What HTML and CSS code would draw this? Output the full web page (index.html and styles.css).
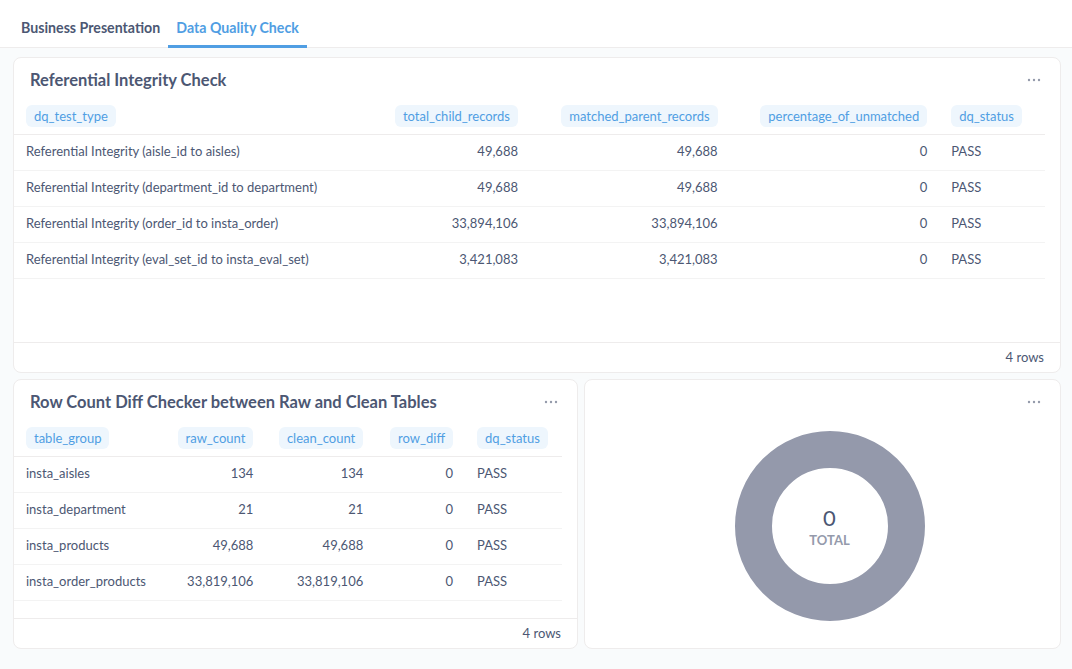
FILE: index.html
```html
<!DOCTYPE html>
<html>
<head>
<meta charset="utf-8">
<link rel="stylesheet" href="styles.css">
</head>
<body>
<div class="tabs">
  <div class="tab">Business Presentation</div>
  <div class="tab active">Data Quality Check</div>
</div>
<div class="grid">
  <section class="card card-wide">
    <div class="card-head">
      <h2 class="title">Referential Integrity Check</h2>
      <svg class="more" width="14" height="4" viewBox="0 0 14 4"><circle cx="2" cy="2" r="1.2"/><circle cx="7" cy="2" r="1.2"/><circle cx="12" cy="2" r="1.2"/></svg>
    </div>
    <div class="card-body">
      <table class="tbl">
        <colgroup><col style="width:370px"><col style="width:145px"><col style="width:200px"><col style="width:210px"><col style="width:106px"></colgroup>
        <thead><tr>
          <th><span class="pill">dq_test_type</span></th>
          <th class="num"><span class="pill">total_child_records</span></th>
          <th class="num"><span class="pill">matched_parent_records</span></th>
          <th class="num"><span class="pill">percentage_of_unmatched</span></th>
          <th><span class="pill">dq_status</span></th>
        </tr></thead>
        <tbody>
          <tr><td>Referential Integrity (aisle_id to aisles)</td><td class="num">49,688</td><td class="num">49,688</td><td class="num">0</td><td>PASS</td></tr>
          <tr><td>Referential Integrity (department_id to department)</td><td class="num">49,688</td><td class="num">49,688</td><td class="num">0</td><td>PASS</td></tr>
          <tr><td>Referential Integrity (order_id to insta_order)</td><td class="num">33,894,106</td><td class="num">33,894,106</td><td class="num">0</td><td>PASS</td></tr>
          <tr><td>Referential Integrity (eval_set_id to insta_eval_set)</td><td class="num">3,421,083</td><td class="num">3,421,083</td><td class="num">0</td><td>PASS</td></tr>
        </tbody>
      </table>
    </div>
    <div class="card-foot">4 rows</div>
  </section>

  <section class="card card-left">
    <div class="card-head">
      <h2 class="title">Row Count Diff Checker between Raw and Clean Tables</h2>
      <svg class="more" width="14" height="4" viewBox="0 0 14 4"><circle cx="2" cy="2" r="1.2"/><circle cx="7" cy="2" r="1.2"/><circle cx="12" cy="2" r="1.2"/></svg>
    </div>
    <div class="card-body">
      <table class="tbl">
        <colgroup><col style="width:152px"><col style="width:99px"><col style="width:110px"><col style="width:90px"><col style="width:97px"></colgroup>
        <thead><tr>
          <th><span class="pill">table_group</span></th>
          <th class="num"><span class="pill">raw_count</span></th>
          <th class="num"><span class="pill">clean_count</span></th>
          <th class="num"><span class="pill">row_diff</span></th>
          <th><span class="pill">dq_status</span></th>
        </tr></thead>
        <tbody>
          <tr><td>insta_aisles</td><td class="num">134</td><td class="num">134</td><td class="num">0</td><td>PASS</td></tr>
          <tr><td>insta_department</td><td class="num">21</td><td class="num">21</td><td class="num">0</td><td>PASS</td></tr>
          <tr><td>insta_products</td><td class="num">49,688</td><td class="num">49,688</td><td class="num">0</td><td>PASS</td></tr>
          <tr><td>insta_order_products</td><td class="num">33,819,106</td><td class="num">33,819,106</td><td class="num">0</td><td>PASS</td></tr>
        </tbody>
      </table>
    </div>
    <div class="card-foot">4 rows</div>
  </section>

  <section class="card card-right">
    <div class="card-head">
      <span class="title"></span>
      <svg class="more" width="14" height="4" viewBox="0 0 14 4"><circle cx="2" cy="2" r="1.2"/><circle cx="7" cy="2" r="1.2"/><circle cx="12" cy="2" r="1.2"/></svg>
    </div>
    <div class="donut-wrap">
      <div class="donut">
        <svg width="190" height="190" viewBox="0 0 190 190"><circle cx="95" cy="95" r="76.5" fill="none" stroke="#9499ab" stroke-width="37"/></svg>
        <div class="donut-label">
          <div class="donut-value">0</div>
          <div class="donut-caption">TOTAL</div>
        </div>
      </div>
    </div>
  </section>
</div>
</body>
</html>
```
FILE: styles.css
```css
* { box-sizing: border-box; }
html, body { margin: 0; padding: 0; }
body {
  font-family: Lato, "Noto Sans", sans-serif;
  background: #f9fbfc;
  color: #4c5773;
  width: 1072px;
  height: 669px;
  overflow: hidden;
}
.tabs {
  display: flex;
  height: 48px;
  background: #fff;
  border-bottom: 1px solid #eeecec;
  padding-left: 13px;
}
.tab {
  height: 48px;
  margin-bottom: -1px;
  padding: 14px 8px 0;
  font-size: 14.2px;
  font-weight: 700;
  line-height: 28px;
  color: #4c5773;
  border-bottom: 3px solid transparent;
}
.tab.active {
  color: #509ee3;
  border-bottom-color: #509ee3;
}
.grid {
  display: grid;
  grid-template-columns: 565px 477px;
  grid-template-rows: 316px 270px;
  gap: 6px;
  padding: 9px 11px 0 13px;
}
.card {
  background: #fff;
  border: 1px solid #eeecec;
  border-radius: 8px;
  display: flex;
  flex-direction: column;
  overflow: hidden;
}
.card-wide { grid-column: 1 / 3; width: 1048px; }
.card-head {
  display: flex;
  align-items: flex-start;
  justify-content: space-between;
  padding: 12px 19px 0 16px;
  height: 40px;
  flex: none;
}
.title {
  margin: 0;
  font-size: 16.5px;
  font-weight: 700;
  line-height: 21px;
  color: #4c5773;
}
.more { fill: #949aab; margin-top: 8px; }
.card-body {
  flex: 1;
  padding-right: 15px;
}
.tbl {
  border-collapse: collapse;
  table-layout: fixed;
  font-size: 13px;
}
.tbl th, .tbl td {
  padding: 0 12px;
  height: 36px;
  text-align: left;
  white-space: nowrap;
  font-weight: 400;
}
.tbl th { border-bottom: 1px solid #eeecec; }
.tbl td { border-bottom: 1px solid #f3f3f3; color: #4c5773; padding-bottom: 2px; }
.tbl .num { text-align: right; }
.pill {
  display: inline-block;
  height: 22px;
  line-height: 22px;
  padding: 0 8px;
  border-radius: 6px;
  background: #eef6fd;
  color: #509ee3;
}
.card-foot {
  flex: none;
  height: 30px;
  border-top: 1px solid #eeecec;
  text-align: right;
  font-size: 13px;
  line-height: 28px;
  padding-right: 16px;
  color: #4c5773;
}
.donut-wrap {
  flex: 1;
  display: flex;
  justify-content: center;
  padding-left: 14px;
  padding-top: 11px;
}
.donut {
  position: relative;
  width: 190px;
  height: 190px;
}
.donut svg { display: block; }
.donut-label {
  position: absolute;
  inset: 0;
  display: flex;
  flex-direction: column;
  align-items: center;
  justify-content: center;
  padding-top: 1px;
}
.donut-value {
  font-size: 22px;
  line-height: 26px;
  color: #4c5773;
}
.donut-caption {
  margin-top: 0;
  font-size: 13px;
  font-weight: 700;
  line-height: 18px;
  color: #949aab;
}
```
